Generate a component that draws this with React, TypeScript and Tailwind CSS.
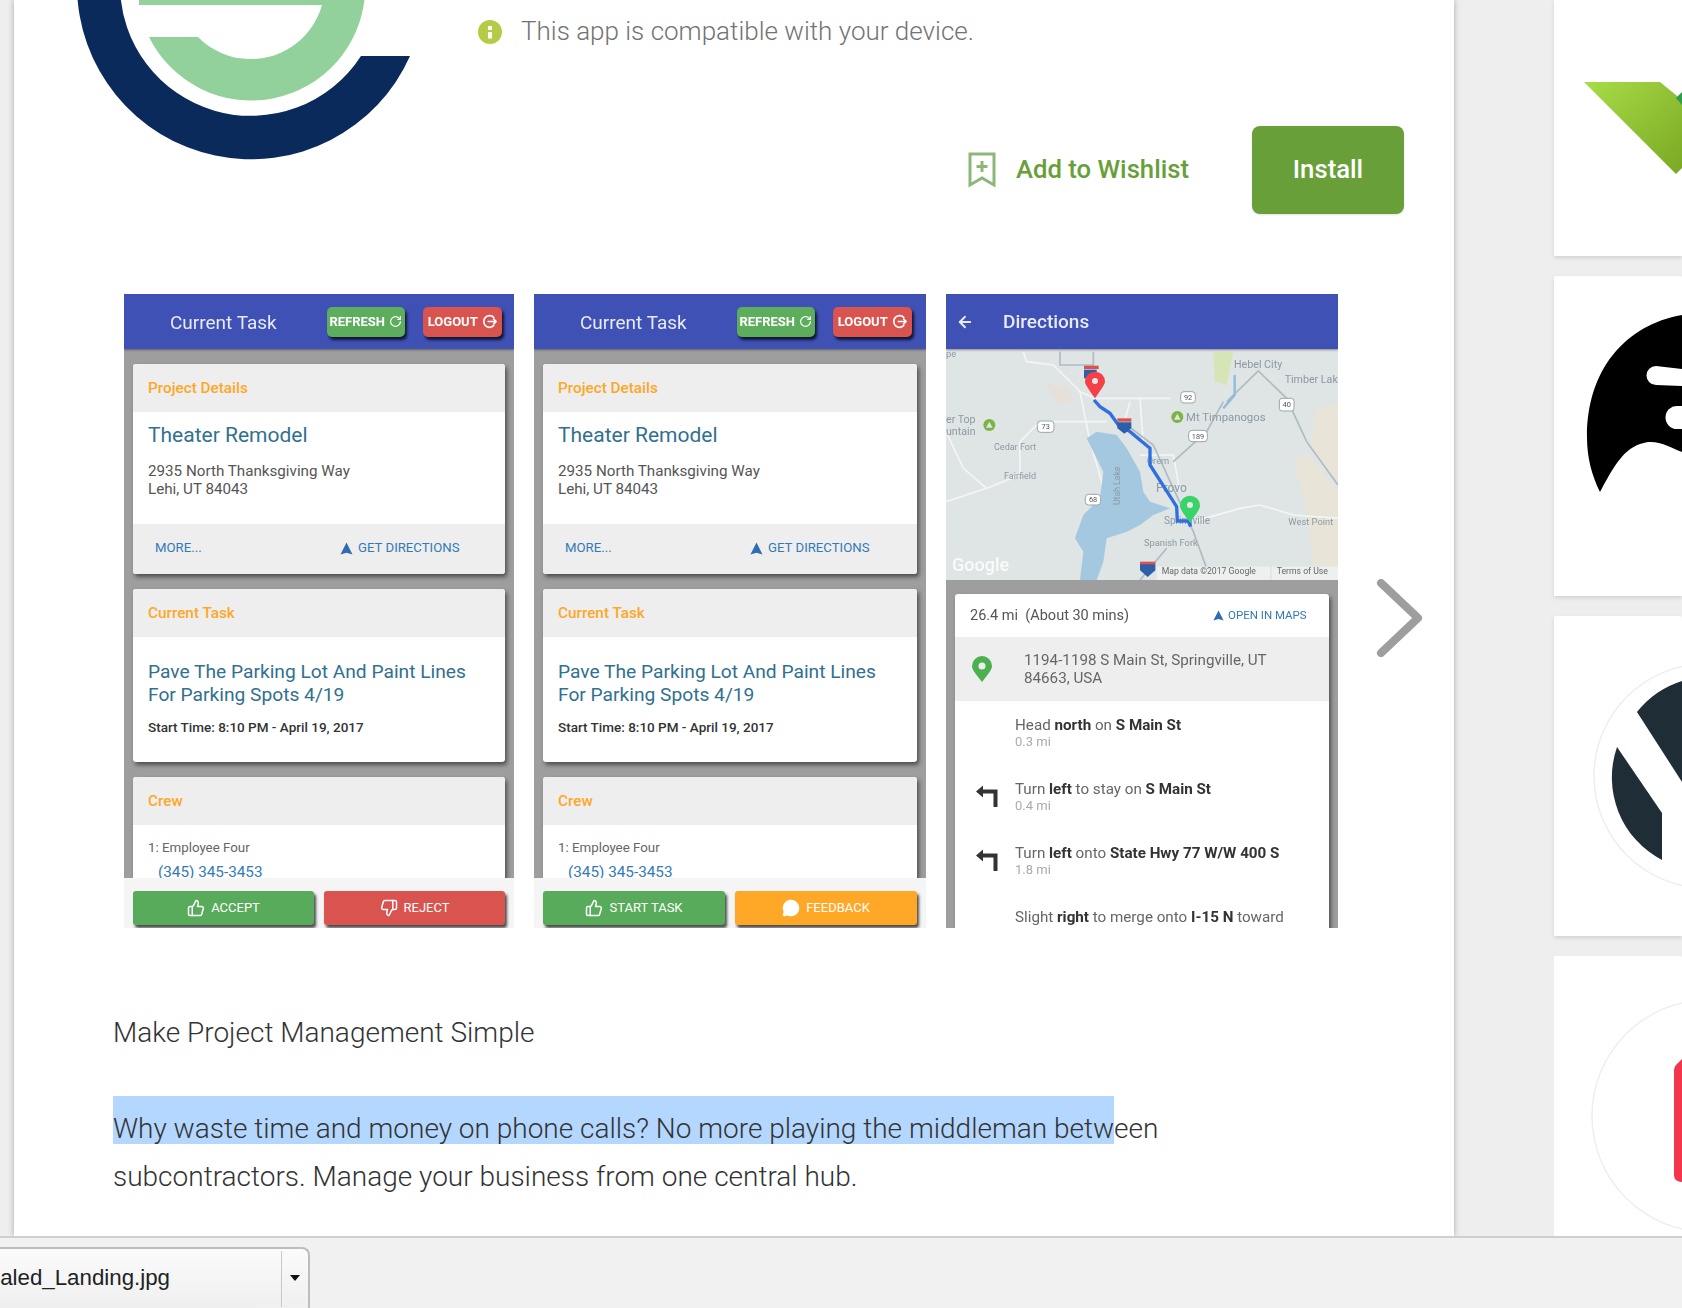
import { ArrowLeft, MessageCircle, RotateCw, ThumbsDown, ThumbsUp } from 'lucide-react';
import type { ReactNode } from 'react';

function NavIcon({ className }: { className: string }) {
  return (
    <svg viewBox="0 0 14 14" className={className}>
      <path d="M7 0.5 L13.5 13.5 L7 11.5 L0.5 13.5 Z" fill="currentColor" />
    </svg>
  );
}

function LogoutIcon() {
  return (
    <svg viewBox="0 0 16 16" className="w-[15px] h-[15px]" fill="none" stroke="currentColor" strokeWidth="1.8">
      <path d="M13 4.2 A6.2 6.2 0 1 0 13 11.8" />
      <path d="M6 8 H15 M12 5 L15 8 L12 11" />
    </svg>
  );
}

function TurnLeft() {
  return (
    <svg viewBox="0 0 24 24" className="w-[24px] h-[24px] text-[#333]">
      <path d="M1 7.5 L8 1.5 V5.5 H22.5 V23 H18.5 V9.5 H8 V13.5 Z" fill="currentColor" />
    </svg>
  );
}

function Card({ title, children }: { title: string; children: ReactNode }) {
  return (
    <div className="bg-white rounded-[3px] shadow-[2px_3px_4px_rgba(0,0,0,0.5)] overflow-hidden shrink-0">
      <div className="bg-[#eeeeee] h-[48px] flex items-center px-[15px] text-[15.3px] font-medium text-[#ffa726]">{title}</div>
      {children}
    </div>
  );
}

function HeaderButton({ label, color, icon }: { label: string; color: string; icon: ReactNode }) {
  return (
    <div className={`${color} h-[30px] rounded-[5px] flex items-center justify-center gap-[4px] text-[13px] font-bold text-white shadow-[2px_3px_3px_rgba(0,0,0,0.75)]`}>
      {label}
      {icon}
    </div>
  );
}

function BottomButton({ label, color, icon }: { label: string; color: string; icon: ReactNode }) {
  return (
    <div className={`${color} flex-1 h-[34px] rounded-[3px] flex items-center justify-center gap-[6px] text-[13px] text-white shadow-[2px_3px_3px_rgba(0,0,0,0.7)]`}>
      {icon}
      {label}
    </div>
  );
}

function TaskPhone({ width, left, right }: { width: string; left: ReactNode; right: ReactNode }) {
  return (
    <div className={`${width} h-[634px] shrink-0 flex flex-col overflow-hidden blur-[0.6px] font-['Roboto',sans-serif]`}>
      <div className="h-[55px] bg-[#3f51b5] flex items-center text-white shadow-[0_1px_2px_rgba(0,0,0,0.4)] z-10">
        <div className="w-[46px]" />
        <span className="text-[19px] text-[#e8eaf6] pt-[4px]">Current Task</span>
        <div className="ml-[50px] w-[78px]">
          <HeaderButton label="REFRESH" color="bg-[#5cad5c]" icon={<RotateCw size={13} strokeWidth={2.2} />} />
        </div>
        <div className="ml-[18px] w-[79px]">
          <HeaderButton label="LOGOUT" color="bg-[#d9534f]" icon={<LogoutIcon />} />
        </div>
      </div>
      <div className="h-[529px] bg-[#9e9e9e] overflow-hidden px-[9px] pt-[15px] flex flex-col gap-[15px]">
        <Card title="Project Details">
          <div className="h-[112px] px-[15px] pt-[11px]">
            <div className="text-[21px] leading-[24px] text-[#31708f]">Theater Remodel</div>
            <div className="mt-[15px] text-[15.2px] leading-[18px] text-[#555]">
              2935 North Thanksgiving Way
              <br />
              Lehi, UT 84043
            </div>
          </div>
          <div className="h-[50px] bg-[#eeeeee] flex items-center pl-[22px] pb-[2px] text-[13.2px] text-[#337ab7]">
            <span className="w-[185px]">MORE...</span>
            <NavIcon className="w-[13px] h-[13px] text-[#2f6db3] mr-[5px]" />
            <span>GET DIRECTIONS</span>
          </div>
        </Card>
        <Card title="Current Task">
          <div className="h-[125px] px-[15px] pt-[23px]">
            <div className="text-[19.2px] leading-[23px] text-[#31708f]">
              Pave The Parking Lot And Paint Lines
              <br />
              For Parking Spots 4/19
            </div>
            <div className="mt-[12px] text-[13.5px] leading-[18px] font-medium text-[#333]">Start Time: 8:10 PM - April 19, 2017</div>
          </div>
        </Card>
        <Card title="Crew">
          <div className="h-[120px] px-[15px] pt-[14px]">
            <div className="text-[13.3px] leading-[18px] text-[#666]">1: Employee Four</div>
            <div className="mt-[5px] ml-[10px] text-[15.3px] leading-[20px] text-[#337ab7]">(345) 345-3453</div>
          </div>
        </Card>
      </div>
      <div className="h-[50px] bg-[#f5f5f5] flex gap-[10px] pt-[13px] px-[9px]">
        {left}
        {right}
      </div>
    </div>
  );
}

function MapView() {
  const label = "font-['Roboto',sans-serif]";
  return (
    <svg viewBox="18 192 1176 693" className="w-[392px] h-[231px] block">
      <rect x="18" y="192" width="1176" height="693" fill="#dfe4e4" />
      <path d="M1130 370 L1194 355 V600 L1160 560 L1110 470 Z" fill="#e8e4d8" />
      <path d="M1060 520 L1110 510 L1194 620 V850 L1120 840 L1100 680 Z" fill="#e8e4d8" />
      <path d="M315 295 L380 305 L400 345 L360 360 Z" fill="#e6e0d8" />
      <path d="M820 200 H880 L860 300 L825 290 Z" fill="#d5e5b5" />
      <g fill="none" stroke="#f4f6f6" strokeWidth="5">
        <path d="M250 200 L260 230 L340 240 L420 320 L465 340 H690" />
        <path d="M18 650 L140 610 L240 570 L240 470 L300 410 H500" />
        <path d="M18 440 L70 550 L140 610" />
        <path d="M420 320 L450 470 L500 640 L560 700" />
        <path d="M570 350 L550 420 M600 340 L610 480" />
        <path d="M760 710 L900 670 L960 660 L1060 690 L1194 700" />
        <path d="M600 510 L700 510 L720 620" />
      </g>
      <g fill="none" stroke="#aebcc2" strokeWidth="5">
        <path d="M360 200 V240 H460 V200" />
        <path d="M860 350 L955 258 L1040 340 L1100 470 L1194 600" />
        <path d="M700 530 L800 440 L850 350" />
        <path d="M560 420 L640 480 L700 610 L760 740 L800 850" />
        <path d="M680 790 L600 885" />
      </g>
      <path d="M884 270 V330 L850 370" fill="none" stroke="#8fbbdc" strokeWidth="7" />
      <path d="M440 460 L470 440 L530 450 L560 490 L600 560 L610 620 L630 650 L690 670 L640 690 L600 720 L560 740 L500 760 L490 830 L470 885 L420 885 L430 800 L405 760 L430 690 L480 640 L490 560 L460 500 Z" fill="#a3c8e0" />
      <g className={label} fontSize="32" fill="#8b9aa5">
        <text x="18" y="215" fontSize="28">pe</text>
        <text x="882" y="248">Hebel City</text>
        <text x="1034" y="294">Timber Lak</text>
        <text x="18" y="415">er Top</text>
        <text x="18" y="450">untain</text>
        <text x="162" y="494" fontSize="27">Cedar Fort</text>
        <text x="192" y="582" fontSize="27">Fairfield</text>
        <text x="738" y="408" fontSize="34">Mt Timpanogos</text>
        <text x="1045" y="720" fontSize="28">West Point</text>
        <text x="612" y="782" fontSize="28">Spanish Fork</text>
        <text x="672" y="716" fontSize="30">Springville</text>
        <text x="648" y="622" fontSize="36">Provo</text>
        <text x="620" y="536" fontSize="28">Orem</text>
        <text x="0" y="0" fontSize="26" transform="translate(540 660) rotate(-90)">Utah Lake</text>
      </g>
      <g fill="#fff" stroke="#9aa5aa" strokeWidth="3">
        <rect x="722" y="320" width="44" height="34" rx="10" />
        <rect x="292" y="408" width="50" height="34" rx="10" />
        <rect x="746" y="436" width="56" height="34" rx="10" />
        <rect x="1018" y="340" width="44" height="38" rx="8" />
        <rect x="436" y="628" width="46" height="32" rx="10" />
      </g>
      <g className={label} fontSize="22" fill="#555" textAnchor="middle">
        <text x="744" y="345">92</text>
        <text x="317" y="433">73</text>
        <text x="774" y="461">189</text>
        <text x="1040" y="367">40</text>
        <text x="459" y="652">68</text>
      </g>
      <circle cx="148" cy="420" r="18" fill="#7cb342" />
      <path d="M148 410 L158 428 H138 Z" fill="#dfe4e4" />
      <circle cx="712" cy="396" r="18" fill="#7cb342" />
      <path d="M712 386 L722 404 H702 Z" fill="#dfe4e4" />
      <path d="M462 345 L480 365 L510 385 L535 420 L570 440 L630 490 L630 540 L710 665 L712 708 L745 708 L752 725" fill="none" stroke="#2f6fe0" strokeWidth="10" />
      <path d="M532 412 H574 V430 L553 446 L532 430 Z" fill="#2e5ea8" />
      <rect x="532" y="400" width="42" height="10" fill="#d9534f" />
      <rect x="432" y="242" width="44" height="10" fill="#d9534f" />
      <path d="M432 254 H470 V280 H432 Z" fill="#2e5ea8" />
      <path d="M465 340 C445 310 435 298 435 290 A30 30 0 1 1 495 290 C495 298 485 310 465 340 Z" fill="#f44046" />
      <circle cx="465" cy="288" r="9" fill="#e8e8e8" />
      <path d="M750 712 C730 685 720 672 720 662 A30 30 0 1 1 780 662 C780 672 770 685 750 712 Z" fill="#38d46a" />
      <circle cx="750" cy="660" r="9" fill="#e8e8e8" />
      <rect x="650" y="845" width="340" height="40" fill="#eef0f0" />
      <rect x="995" y="845" width="199" height="40" fill="#eef0f0" />
      <g className={label} fontSize="26" fill="#666">
        <text x="665" y="868">Map data ©2017 Google</text>
        <text x="1010" y="868">Terms of Use</text>
      </g>
      <path d="M600 836 H646 V856 L623 876 L600 856 Z" fill="#2e5ea8" />
      <rect x="600" y="830" width="46" height="8" fill="#d9534f" />
      <text x="36" y="858" className={label} fontSize="54" fontWeight="500" fill="#fff" opacity="0.85">Google</text>
    </svg>
  );
}

function Step({ sub, icon, children }: { sub?: string; icon?: boolean; children: ReactNode }) {
  return (
    <div className="h-[64px] flex shrink-0">
      <div className="w-[60px] pl-[20px] pt-[4px]">{icon && <TurnLeft />}</div>
      <div>
        <div className="text-[15.2px] leading-[18px] text-[#666] whitespace-nowrap">{children}</div>
        {sub && <div className="text-[13px] leading-[16px] text-[#aaa]">{sub}</div>}
      </div>
    </div>
  );
}

function DirectionsPhone() {
  return (
    <div className="w-[392px] h-[634px] shrink-0 flex flex-col overflow-hidden blur-[0.6px] font-['Roboto',sans-serif]">
      <div className="h-[55px] bg-[#3f51b5] flex items-center text-[#e8eaf6] shrink-0 shadow-[0_1px_2px_rgba(0,0,0,0.4)] z-10">
        <ArrowLeft className="ml-[10px]" size={18} strokeWidth={2.5} />
        <span className="ml-[29px] text-[19px] font-medium pt-[2px]">Directions</span>
      </div>
      <MapView />
      <div className="flex-1 bg-[#9e9e9e] px-[9px] pt-[14px] overflow-hidden">
        <div className="bg-white rounded-t-[3px] h-[340px] shadow-[2px_3px_4px_rgba(0,0,0,0.5)]">
          <div className="h-[43px] flex items-center pl-[15px] text-[14.5px] text-[#555]">
            <span className="w-[243px] whitespace-pre">26.4 mi  (About 30 mins)</span>
            <NavIcon className="w-[11px] h-[11px] text-[#2f6db3] mr-[4px]" />
            <span className="text-[11.5px] text-[#337ab7]">OPEN IN MAPS</span>
          </div>
          <div className="h-[64px] bg-[#eeeeee] flex items-center">
            <svg viewBox="0 0 20 26" className="ml-[17px] w-[20px] h-[26px]">
              <path d="M10 26 C4 18 0 14 0 10 A10 10 0 1 1 20 10 C20 14 16 18 10 26 Z" fill="#4caf50" />
              <circle cx="10" cy="10" r="3.5" fill="#eee" />
            </svg>
            <div className="ml-[32px] text-[15.2px] leading-[18px] text-[#666]">
              1194-1198 S Main St, Springville, UT
              <br />
              84663, USA
            </div>
          </div>
          <div className="pt-[15px] flex flex-col">
            <Step sub="0.3 mi">
              Head <b className="font-bold text-[#333]">north</b> on <b className="font-bold text-[#333]">S Main St</b>
            </Step>
            <Step sub="0.4 mi" icon>
              Turn <b className="font-bold text-[#333]">left</b> to stay on <b className="font-bold text-[#333]">S Main St</b>
            </Step>
            <Step sub="1.8 mi" icon>
              Turn <b className="font-bold text-[#333]">left</b> onto <b className="font-bold text-[#333]">State Hwy 77 W/W 400 S</b>
            </Step>
            <Step>
              Slight <b className="font-bold text-[#333]">right</b> to merge onto <b className="font-bold text-[#333]">I-15 N</b> toward
            </Step>
          </div>
        </div>
      </div>
    </div>
  );
}

function Sidebar() {
  return (
    <div className="w-[128px] flex flex-col gap-[20px] shrink-0">
      <div className="h-[256px] bg-white shadow-[0_2px_4px_rgba(0,0,0,0.12)] shrink-0">
        <svg viewBox="1554 0 128 256" className="w-[128px] h-[256px] block">
          <defs>
            <linearGradient id="leaf" x1="0" y1="0" x2="1" y2="1">
              <stop offset="0" stopColor="#a8dc48" />
              <stop offset="1" stopColor="#7aa823" />
            </linearGradient>
          </defs>
          <path d="M1584 82 H1660 L1682 100 V168 L1676 174 Z" fill="url(#leaf)" />
          <path d="M1676 98 L1682 92 V105 Z" fill="#2e9e4a" />
        </svg>
      </div>
      <div className="h-[320px] bg-white rounded-t-[2px] shadow-[0_2px_4px_rgba(0,0,0,0.12)] shrink-0">
        <svg viewBox="1554 276 128 320" className="w-[128px] h-[320px] block">
          <path d="M1682 315 C1625 325 1587 370 1587 437 C1587 458 1592 476 1600 492 C1612 470 1622 450 1640 444 C1655 438 1668 446 1682 452 Z" fill="#000" />
          <path d="M1656 366 L1682 369 V386 L1656 385 A9.5 9.5 0 0 1 1656 366 Z" fill="#fff" />
          <path d="M1677 406 H1682 V429 H1677 A11.5 11.5 0 0 1 1677 406 Z" fill="#fff" />
        </svg>
      </div>
      <div className="h-[320px] bg-white rounded-t-[2px] shadow-[0_2px_4px_rgba(0,0,0,0.12)] shrink-0">
        <svg viewBox="1554 616 128 320" className="w-[128px] h-[320px] block">
          <circle cx="1706" cy="776" r="112" fill="#fff" stroke="#eeeeee" strokeWidth="1.5" />
          <path d="M1617 747 L1662 813 V860 A93 93 0 0 1 1617 747 Z" fill="#1f2d36" />
          <path d="M1637 712 L1682 782 V681 A93 93 0 0 0 1637 712 Z" fill="#1f2d36" />
        </svg>
      </div>
      <div className="h-[280px] bg-white rounded-t-[2px] shrink-0">
        <svg viewBox="1554 956 128 280" className="w-[128px] h-[280px] block">
          <circle cx="1708" cy="1116" r="116" fill="#fff" stroke="#eeeeee" strokeWidth="1.5" />
          <path d="M1682 1059 L1678 1063 Q1674 1066 1674 1071 V1175 Q1674 1182 1682 1182 Z" fill="#f4364c" />
        </svg>
      </div>
    </div>
  );
}

export default function App() {
  return (
    <div className="w-[1682px] h-[1308px] overflow-hidden bg-[#eeeeee] flex flex-col font-['Roboto',sans-serif]">
      <div className="h-[1236px] flex pl-[14px] overflow-hidden shrink-0">
        <div className="w-[1440px] h-[1236px] bg-white shadow-[0_0_6px_rgba(0,0,0,0.3)] shrink-0">
          <div className="h-[214px] flex">
            <svg viewBox="73 0 392 170" className="w-[392px] h-[170px] ml-[59px] shrink-0">
              <path d="M77 -14 A174 174 0 0 0 410 56 L361 56 A131 131 0 0 1 120 -14 Z" fill="#0a2a5c" />
              <path d="M149 37 L198 37 A74 74 0 0 0 322 5 L139 5 L139 -5 L364.9 -5 A114 114 0 0 1 149 37 Z" fill="#93d19c" />
            </svg>
            <div className="flex-1 pl-[13px] pr-[50px]">
              <div className="mt-[20px] h-[24px] flex items-center gap-[19px]">
                <svg viewBox="0 0 24 24" className="w-[24px] h-[24px]">
                  <circle cx="12" cy="12" r="12" fill="#b4cb45" />
                  <rect x="10" y="6" width="4" height="4" fill="#fff" />
                  <rect x="10" y="12" width="4" height="6.5" fill="#fff" />
                </svg>
                <span className="text-[26px] font-light text-[#737373] whitespace-nowrap pb-[2px]">This app is compatible with your device.</span>
              </div>
              <div className="mt-[82px] flex items-center justify-end">
                <svg viewBox="0 0 28 36" className="w-[28px] h-[36px] mr-[1px]" fill="none" stroke="#8db77a" strokeWidth="3">
                  <path d="M2 2 H26 V33 L14 26 L2 33 Z" />
                  <path d="M14 9 V20 M8.5 14.5 H19.5" />
                </svg>
                <span className="ml-[19px] text-[25.7px] font-medium text-[#689f38] whitespace-nowrap pb-[2px]">Add to Wishlist</span>
                <div className="ml-[63px] w-[152px] h-[88px] rounded-[8px] bg-[#689f38] flex items-center justify-center text-[25.7px] font-medium text-white pb-[2px] shadow-[0_1px_2px_rgba(0,0,0,0.12)]">
                  Install
                </div>
              </div>
            </div>
          </div>
          <div className="mt-[80px] pl-[110px] flex">
            <TaskPhone
              width="w-[390px]"
              left={<BottomButton label="ACCEPT" color="bg-[#58ab5a]" icon={<ThumbsUp size={18} />} />}
              right={<BottomButton label="REJECT" color="bg-[#d9534f]" icon={<ThumbsDown size={18} />} />}
            />
            <div className="w-[20px] shrink-0" />
            <TaskPhone
              width="w-[392px]"
              left={<BottomButton label="START TASK" color="bg-[#58ab5a]" icon={<ThumbsUp size={18} />} />}
              right={<BottomButton label="FEEDBACK" color="bg-[#ffa726]" icon={<MessageCircle size={18} fill="currentColor" />} />}
            />
            <div className="w-[20px] shrink-0" />
            <DirectionsPhone />
            <svg viewBox="0 0 47 78" className="ml-[38px] mt-[285px] w-[47px] h-[78px] shrink-0" fill="none" stroke="#9e9e9e" strokeWidth="8" strokeLinecap="round" strokeLinejoin="round">
              <path d="M5 4 L42 39 L5 74" />
            </svg>
          </div>
          <div className="mt-[81px] pl-[99px] text-[28px] font-light text-[#333] whitespace-nowrap">
            <div className="leading-[48px]">Make Project Management Simple</div>
            <div className="mt-[39px] h-[48px]">
              <span className="inline-block h-[48px] leading-[66px] bg-[#b3d7ff]">Why waste time and money on phone calls? No more playing the middleman betw</span>
              <span className="inline-block h-[48px] leading-[66px]">een</span>
            </div>
            <div className="mt-[9px] leading-[48px]">subcontractors. Manage your business from one central hub.</div>
          </div>
        </div>
        <div className="w-[100px] shrink-0" />
        <Sidebar />
      </div>
      <div className="h-[72px] bg-[#f1f1f1] border-t-2 border-[#cfcfcf] pt-[9px] shrink-0 overflow-hidden">
        <div className="w-[310px] h-[80px] flex rounded-tr-[8px] border-t-2 border-r-2 border-[#bdbdbd] bg-gradient-to-b from-[#fbfbfb] to-[#ececec]">
          <div className="w-[281px] h-[58px] flex items-center justify-end pr-[111px] text-[22.3px] font-['Liberation_Sans',sans-serif] text-[#222] whitespace-nowrap">
            aled_Landing.jpg
          </div>
          <div className="flex-1 h-[56px] mt-[2px] border-l border-[#c8c8c8] flex justify-center pt-[24px]">
            <div className="w-0 h-0 border-l-[5px] border-r-[5px] border-t-[6px] border-l-transparent border-r-transparent border-t-[#111]" />
          </div>
        </div>
      </div>
    </div>
  );
}
